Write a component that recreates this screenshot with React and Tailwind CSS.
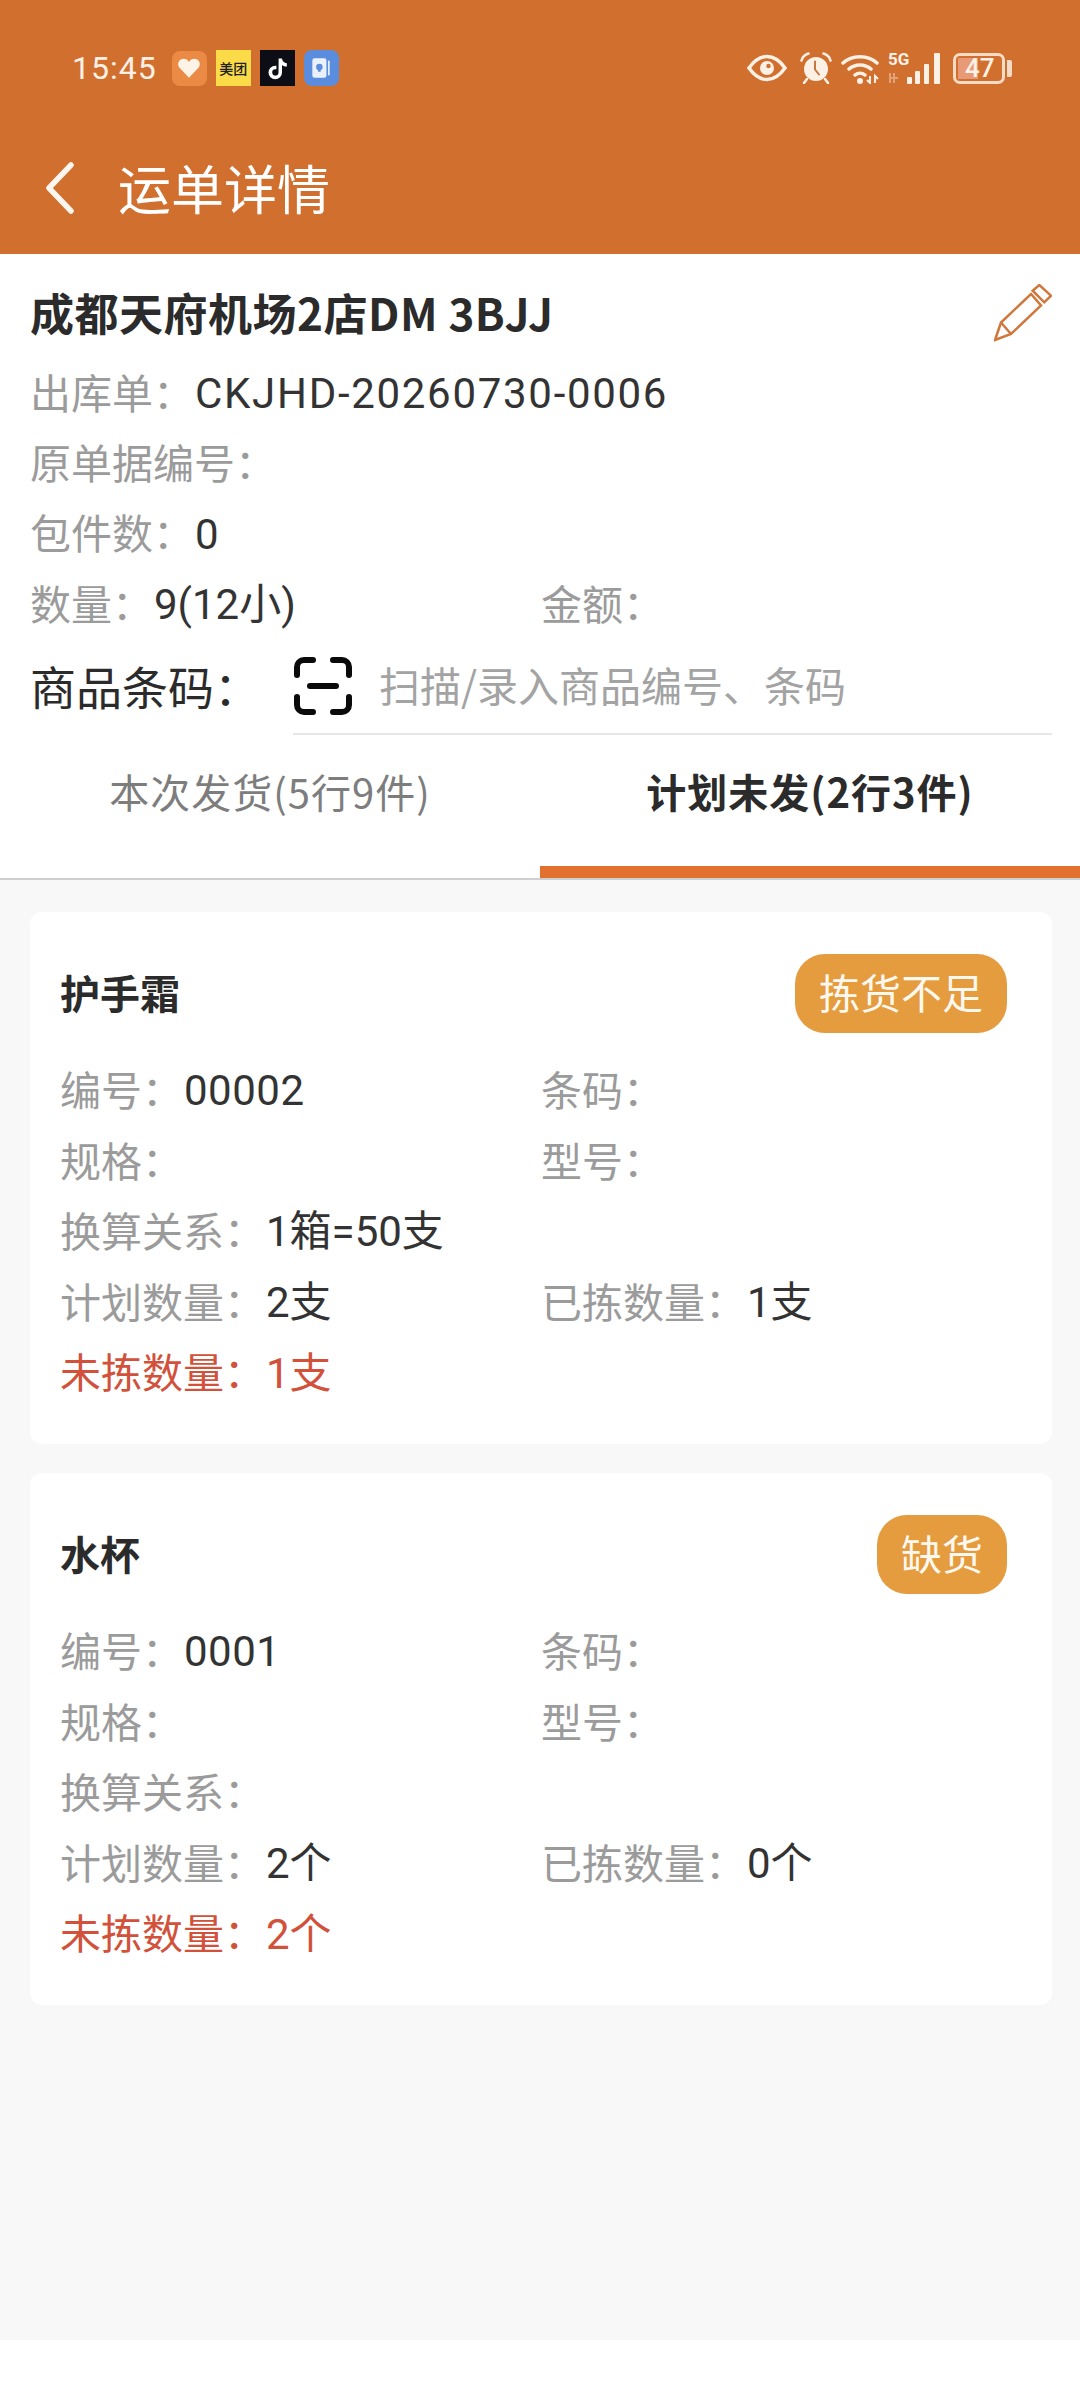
const ITEMS = [
  {
    name: '护手霜',
    status: '拣货不足',
    code: '00002',
    ratio: '1箱=50支',
    planned: '2支',
    picked: '1支',
    missing: '1支'
  },
  {
    name: '水杯',
    status: '缺货',
    code: '0001',
    ratio: '',
    planned: '2个',
    picked: '0个',
    missing: '2个'
  }
];

function Field({ label, value, className = '', valueClass = '' }) {
  return (
    <div className={`flex h-[70.6px] items-center pb-[3px] text-[41px] text-[#9b9b9b] ${className}`}>
      <span>{label}：</span>
      {value && (
        <span className={`ml-[1px] pt-[4px] font-['Roboto','Noto_Sans_CJK_SC',sans-serif] text-[42px] text-[#333] ${valueClass}`}>
          {value}
        </span>
      )}
    </div>
  );
}

function AppIcons() {
  return (
    <div className="flex items-center gap-[9px]">
      <div className="flex h-[35px] w-[35px] items-center justify-center rounded-[8px] bg-[#ea8a45]">
        <svg viewBox="0 0 24 24" className="h-[26px] w-[26px]">
          <path d="M12 21 3 11.500C.5 8 3 3.500 7 3.500c2.200 0 3.800 1 5 3 1.200-2 2.800-3 5-3 4 0 6.500 4.500 4 8z" fill="#fdf3e6" />
        </svg>
      </div>
      <div className="flex h-[36px] w-[35px] items-center justify-center bg-[#fbdc48] text-[14px] font-medium leading-none text-[#222]">
        美团
      </div>
      <div className="flex h-[36px] w-[35px] items-center justify-center bg-[#0d0d16]">
        <svg viewBox="0 0 24 24" className="h-[27px] w-[27px]">
          <path d="M13 3h3c.3 2.500 1.800 4 4.300 4.300v3c-1.700 0-3.100-.5-4.300-1.400v6.600a6 6 0 1 1-6-6h1v3.200h-1a2.800 2.800 0 1 0 2.900 2.800z" fill="#fff" />
        </svg>
      </div>
      <div className="flex h-[36px] w-[35px] items-center justify-center rounded-[8px] bg-[#5b8dde]">
        <svg viewBox="0 0 24 24" className="h-[26px] w-[26px]">
          <rect x="4" y="3" width="13" height="18" rx="2" fill="#eaf1fd" />
          <rect x="18.500" y="5" width="1.500" height="14" rx=".7" fill="#eaf1fd" />
          <circle cx="10.500" cy="11" r="3" fill="#5b8dde" />
          <rect x="9.300" y="13.500" width="2.400" height="2" fill="#5b8dde" />
        </svg>
      </div>
    </div>
  );
}

function SystemIcons() {
  return (
    <div className="flex items-center text-[#fdf1e6]">
      {/* eye */}
      <svg viewBox="0 0 40 28" className="h-[28px] w-[40px]" fill="none">
        <path d="M2 14C8 5.500 13.500 2.500 20 2.500S32 5.500 38 14c-6 8.500-11.500 11.500-18 11.500S8 22.500 2 14z" stroke="currentColor" strokeWidth="3.500" />
        <circle cx="20" cy="14" r="7" fill="currentColor" />
        <circle cx="21.500" cy="12" r="2.200" fill="#d16f2f" />
      </svg>
      {/* alarm */}
      <svg viewBox="0 0 32 32" className="ml-[13px] h-[32px] w-[32px]" fill="none">
        <circle cx="16" cy="17" r="12" fill="currentColor" />
        <path d="M1.500 8.500C2.500 4.500 5 2.500 8.500 1.500M30.500 8.500C29.500 4.500 27 2.500 23.500 1.500M7 27l-3 4M25 27l3 4" stroke="currentColor" strokeWidth="2.500" strokeLinecap="round" />
        <path d="M15 9.500v8l4 5" stroke="#c9773b" strokeWidth="2" strokeLinecap="round" />
      </svg>
      {/* wifi */}
      <svg viewBox="0 0 40 32" className="ml-[9px] h-[32px] w-[40px]" fill="none">
        <path d="M2 11C11 2.500 27 2.500 36 11M8 17c6-5.500 16-5.500 22 0M14 23c3-2.500 7-2.500 10 0" stroke="currentColor" strokeWidth="3.500" strokeLinecap="round" />
        <circle cx="19" cy="29" r="3" fill="currentColor" />
        <path d="M29 24v7l-3-3M34 31v-7l3 3" stroke="currentColor" strokeWidth="2" />
      </svg>
      {/* 5G and signal */}
      <div className="relative ml-[7px] h-[32px] w-[53px]">
        <span className="absolute left-0 top-[-2px] font-['Roboto',sans-serif] text-[17px] font-bold leading-[18px]">5G</span>
        <svg viewBox="0 0 53 32" className="h-[32px] w-[53px]">
          <path d="M2 21v10M6 31V21M10 26H2" stroke="currentColor" strokeOpacity=".4" strokeWidth="2" />
          <rect x="19" y="25" width="5" height="7" rx="1" fill="currentColor" />
          <rect x="27" y="19" width="5" height="13" rx="1" fill="currentColor" />
          <rect x="36" y="12" width="5" height="20" rx="1" fill="currentColor" />
          <rect x="46" y="1" width="6" height="31" rx="1" fill="currentColor" />
        </svg>
      </div>
      {/* battery */}
      <div className="ml-[12px] flex items-center gap-[2px]">
        <div className="relative flex h-[31px] w-[52px] items-center overflow-hidden rounded-[7px] border-[3px] border-[#f6dcc6] pl-[9px]">
          <div className="absolute inset-y-[2px] left-[2px] w-[20px] bg-[#e79a75]" />
          <span className="relative font-['Roboto',sans-serif] text-[26px] font-medium leading-none">47</span>
        </div>
        <div className="h-[17px] w-[5px] rounded-r-[2px] bg-[#f6dcc6]" />
      </div>
    </div>
  );
}

function BackIcon() {
  return (
    <svg viewBox="0 0 30 52" className="h-[52px] w-[30px] shrink-0" fill="none" stroke="#fdf6ee" strokeWidth="5.500" strokeLinecap="round" strokeLinejoin="round">
      <path d="M26 3 4 26l22 23" />
    </svg>
  );
}

function PencilIcon() {
  return (
    <svg viewBox="0 0 58 58" className="h-[58px] w-[58px]" fill="none" stroke="#d0783c" strokeWidth="2.500">
      <path d="M1 56 7 38.500 37 10 47 21.500 17 50z" />
      <path d="M7 38.500 17 50" />
      <path d="M38.700 6.700 45.300 1 57 11.700 50.300 18.300z" />
    </svg>
  );
}

function ScanIcon() {
  return (
    <svg viewBox="0 0 60 60" className="h-[60px] w-[60px] shrink-0" fill="none" stroke="#0a0a0a" strokeWidth="6" strokeLinecap="round">
      <path d="M20 4H11a7 7 0 0 0-7 7v8" />
      <path d="M40 4h9a7 7 0 0 1 7 7v8" />
      <path d="M20 56H11a7 7 0 0 1-7-7v-8" />
      <path d="M40 56h9a7 7 0 0 0 7-7v-8" />
      <path d="M17 30h26" />
    </svg>
  );
}

function ItemCard({ item }) {
  return (
    <div className="ml-[30px] mr-[28px] rounded-[12px] bg-white px-[30px] pb-[36px] pt-[42px]">
      <div className="mb-[22px] flex items-center justify-between pr-[15px]">
        <div className="pb-[3px] text-[40px] font-bold text-[#2b2b2b]">{item.name}</div>
        <div className="flex h-[79px] items-center rounded-[30px] bg-[#e49c3f] px-[24px] pb-[3px] text-[41px] text-[#fff8ee]">
          {item.status}
        </div>
      </div>
      <div className="grid grid-cols-[481px_1fr]">
        <Field label="编号" value={item.code} valueClass="tracking-[0.5px]" />
        <Field label="条码" />
        <Field label="规格" />
        <Field label="型号" />
        <Field label="换算关系" value={item.ratio} className="col-span-2" />
        <Field label="计划数量" value={item.planned} />
        <Field label="已拣数量" value={item.picked} />
        <div className="col-span-2 flex h-[70.6px] items-center pb-[3px] text-[41px] text-[#d2513a]">
          <span>未拣数量：</span>
          <span className="ml-[1px] pt-[4px] font-['Roboto','Noto_Sans_CJK_SC',sans-serif] text-[42px]">{item.missing}</span>
        </div>
      </div>
    </div>
  );
}

export default function App() {
  return (
    <div className="flex h-[2398px] w-[1080px] flex-col bg-white font-['Noto_Sans_CJK_SC','Roboto',sans-serif]">
      {/* Status bar and title */}
      <header className="h-[254px] bg-[#d16f2f] pt-[50px] text-white">
        <div className="flex h-[36px] items-center justify-between pl-[72px] pr-[68px]">
          <div className="flex items-center gap-[15px]">
            <span className="font-['Roboto',sans-serif] text-[32px] leading-none tracking-[1px] text-[#fdf1e6]">15:45</span>
            <AppIcons />
          </div>
          <SystemIcons />
        </div>
        <div className="mt-[62px] flex h-[80px] items-center pl-[45px]">
          <BackIcon />
          <h1 className="ml-[43px] pb-[2px] text-[53px] font-normal leading-none">运单详情</h1>
        </div>
      </header>

      {/* Order summary */}
      <section className="pl-[30px] pr-[28px] pt-[24px]">
        <div className="mb-[10px] flex h-[70px] items-center justify-between">
          <div className="pb-[3px] text-[44px] font-bold tracking-[0.5px] text-[#2b2b2b]">成都天府机场2店DM 3BJJ</div>
          <PencilIcon />
        </div>
        <Field label="出库单" value="CKJHD-20260730-0006" className="!h-[70px]" valueClass="tracking-[1.7px]" />
        <Field label="原单据编号" className="!h-[70px]" />
        <Field label="包件数" value="0" className="!h-[71px]" />
        <div className="grid grid-cols-[511px_1fr]">
          <Field label="数量" value="9(12小)" className="!h-[70px]" />
          <Field label="金额" className="!h-[70px]" />
        </div>
        <div className="flex h-[96px]">
          <div className="flex w-[263px] items-center pb-[3px] text-[46px] text-[#2b2b2b]">商品条码：</div>
          <div className="flex flex-1 items-center gap-[26px] border-b-2 border-[#e6e6e6]">
            <ScanIcon />
            <span className="pb-[3px] text-[41px] text-[#a3a3a3]">扫描/录入商品编号、条码</span>
          </div>
        </div>
      </section>

      {/* Tabs */}
      <nav className="flex h-[145px] border-b-2 border-[#cfcfcf]">
        <div className="flex h-[116px] flex-1 items-center justify-center pb-[5px] text-[40px] tracking-[1px] text-[#7d7d7d]">
          本次发货(5行9件)
        </div>
        <div className="flex flex-1 flex-col">
          <div className="flex h-[116px] items-center justify-center pb-[5px] text-[40px] font-bold tracking-[1px] text-[#2b2b2b]">
            计划未发(2行3件)
          </div>
          <div className="mt-[15px] h-[12px] bg-[#e2702f]" />
        </div>
      </nav>

      {/* Items */}
      <main className="mb-[58px] flex flex-1 flex-col gap-[29px] bg-[#f8f8f8] pt-[32px]">
        {ITEMS.map(item => (
          <ItemCard key={item.name} item={item} />
        ))}
      </main>
    </div>
  );
}
